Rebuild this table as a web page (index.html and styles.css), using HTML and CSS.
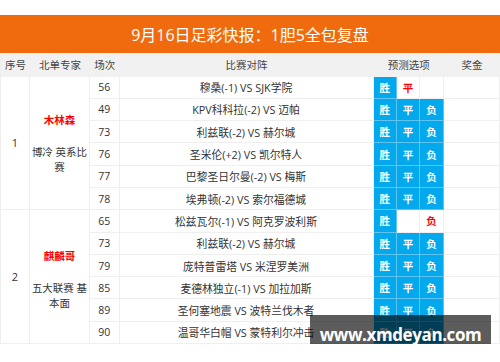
FILE: index.html
```html
<!DOCTYPE html>
<html lang="zh-CN">
<head>
<meta charset="utf-8">
<title>9月16日足彩快报</title>
<link rel="stylesheet" href="styles.css">
</head>
<body>
<div class="page">
  <div class="title">9月16日足彩快报：1胆5全包复盘</div>
  <div class="grid">
    <div class="h">序号</div>
    <div class="h">北单专家</div>
    <div class="h">场次</div>
    <div class="h">比赛对阵</div>
    <div class="h pred-h">预测选项</div>
    <div class="h">奖金</div>

    <div class="c idx">1</div>
    <div class="c expert"><div class="name">木林森</div><div class="desc">博冷 英系比赛</div></div>
    <div class="c">56</div><div class="c match">穆桑(-1) VS SJK学院</div><div class="c pick on">胜</div><div class="c pick red">平</div><div class="c pick"></div><div class="c"></div>
    <div class="c">49</div><div class="c match">KPV科科拉(-2) VS 迈帕</div><div class="c pick on">胜</div><div class="c pick on">平</div><div class="c pick on">负</div><div class="c"></div>
    <div class="c">73</div><div class="c match">利兹联(-2) VS 赫尔城</div><div class="c pick on">胜</div><div class="c pick on">平</div><div class="c pick on">负</div><div class="c"></div>
    <div class="c">76</div><div class="c match">圣米伦(+2) VS 凯尔特人</div><div class="c pick on">胜</div><div class="c pick on">平</div><div class="c pick on">负</div><div class="c"></div>
    <div class="c">77</div><div class="c match">巴黎圣日尔曼(-2) VS 梅斯</div><div class="c pick on">胜</div><div class="c pick on">平</div><div class="c pick on">负</div><div class="c"></div>
    <div class="c">78</div><div class="c match">埃弗顿(-2) VS 索尔福德城</div><div class="c pick on">胜</div><div class="c pick on">平</div><div class="c pick on">负</div><div class="c"></div>

    <div class="c idx">2</div>
    <div class="c expert g2"><div class="name">麒麟哥</div><div class="desc">五大联赛 基本面</div></div>
    <div class="c">65</div><div class="c match">松兹瓦尔(-1) VS 阿克罗波利斯</div><div class="c pick on">胜</div><div class="c pick"></div><div class="c pick red">负</div><div class="c"></div>
    <div class="c">73</div><div class="c match">利兹联(-2) VS 赫尔城</div><div class="c pick on">胜</div><div class="c pick on">平</div><div class="c pick on">负</div><div class="c"></div>
    <div class="c">79</div><div class="c match">庞特普雷塔 VS 米涅罗美洲</div><div class="c pick on">胜</div><div class="c pick on">平</div><div class="c pick on">负</div><div class="c"></div>
    <div class="c">85</div><div class="c match">麦德林独立(-1) VS 加拉加斯</div><div class="c pick on">胜</div><div class="c pick on">平</div><div class="c pick on">负</div><div class="c"></div>
    <div class="c">89</div><div class="c match">圣何塞地震 VS 波特兰伐木者</div><div class="c pick on">胜</div><div class="c pick on">平</div><div class="c pick on">负</div><div class="c"></div>
    <div class="c">90</div><div class="c match">温哥华白帽 VS 蒙特利尔冲击</div><div class="c pick on">胜</div><div class="c pick on">平</div><div class="c pick on">负</div><div class="c"></div>
  </div>
  <div class="watermark"><span class="wm-text">www.xmdeyan.com</span><div class="wm-strip"></div></div>
</div>
</body>
</html>
```
FILE: styles.css
```css
html, body {
  margin: 0;
  padding: 0;
  background: #fff;
}
body {
  font-family: "Open Sans", "Noto Sans CJK SC", sans-serif;
  color: #333;
}
.page {
  position: relative;
  width: 500px;
  padding-top: 15px;
}
.title {
  height: 38px;
  background: #ef6b0d;
  color: #fff;
  font-size: 16px;
  display: flex;
  align-items: center;
  justify-content: center;
}
.grid {
  display: grid;
  grid-template-columns: 29px 60px 29.5px 254px 23.3px 23.6px 23.4px 1fr;
  grid-template-rows: 23.5px repeat(12, 22.3px);
  font-size: 10.5px;
  border-left: 1px solid #eeeeee;
  box-sizing: border-box;
}
.h {
  background: #f1f1f1;
  color: #444;
  display: flex;
  align-items: center;
  justify-content: center;
}
.pred-h {
  grid-column: span 3;
}
.c {
  display: flex;
  align-items: center;
  justify-content: center;
  border-right: 1px solid #efefef;
  border-bottom: 1px solid #efefef;
  box-sizing: border-box;
  white-space: nowrap;
}
.match {
  font-size: 10.8px;
}
.idx {
  grid-row: span 6;
  font-size: 11px;
}
.expert {
  grid-row: span 6;
  flex-direction: column;
  white-space: normal;
  text-align: center;
  padding: 1px 0 0;
  line-height: 14.5px;
}
.expert.g2 {
  padding-top: 6px;
}
.name {
  color: #ff0000;
  font-weight: bold;
  margin-bottom: 18px;
}
.pick {
  font-weight: bold;
}
.pick.on {
  background: #04a8ec;
  color: #fff;
  border-right-color: #5ec5f0;
  border-bottom-color: #5ec5f0;
}
.pick.red {
  color: #ff0000;
}
.watermark {
  position: absolute;
  left: 310px;
  top: 315px;
  width: 181px;
  height: 38px;
  background: rgba(0, 0, 0, 0.64);
}
.wm-text {
  display: block;
  color: #fff;
  font-family: "Open Sans", sans-serif;
  font-weight: bold;
  font-size: 17px;
  letter-spacing: -0.4px;
  line-height: 18px;
  text-align: center;
  margin-top: 11px;
  position: relative;
  z-index: 1;
}
.wm-strip {
  position: absolute;
  left: 0;
  right: 0;
  bottom: 0;
  height: 9.5px;
  background: #000;
}
```
